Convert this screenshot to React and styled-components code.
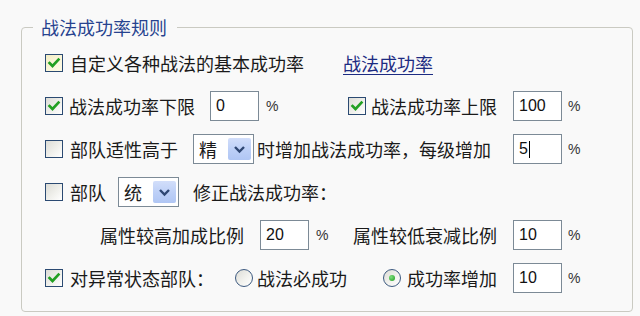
import React from 'react';
import styled, { createGlobalStyle } from 'styled-components';

const GlobalStyle = createGlobalStyle`
  html, body {
    margin: 0;
    padding: 0;
    background: #f9f9f9;
  }
  body {
    font-family: "Noto Sans CJK SC", "Noto Sans", sans-serif;
    color: #1a1a1a;
  }
`;

const Group = styled.fieldset`
  box-sizing: border-box;
  width: 612px;
  margin: 15px 0 0 21px;
  padding: 9px 0 18px 0;
  border: 1px solid #cacac2;
  border-radius: 4px;
`;

const Legend = styled.legend`
  margin-left: 11px;
  padding: 0 10px 0 8px;
  font-size: 18px;
  line-height: 24px;
  color: #27438f;
`;

const Rows = styled.div`
  display: flex;
  flex-direction: column;
  gap: 13px;
  padding: 0 48px 0 23px;
`;

const Row = styled.div`
  display: flex;
  align-items: center;
  height: 30px;
  padding-left: ${(p) => p.$indent || 0}px;
`;

const Label = styled.span`
  font-size: 18px;
  line-height: 30px;
  white-space: nowrap;
  margin-left: ${(p) => p.$gap || 0}px;
`;

const Link = styled(Label)`
  color: #1d2c82;
  text-decoration: underline;
  text-underline-offset: 3px;
`;

const Right = styled.div`
  display: flex;
  align-items: center;
  margin-left: auto;
`;

const Box = styled.span`
  box-sizing: border-box;
  flex: none;
  width: 18px;
  height: 18px;
  margin-left: ${(p) => p.$gap || 0}px;
  border: 1px solid #2b4a72;
  background: ${(p) =>
    p.$hot
      ? 'linear-gradient(135deg, #f4eec4 0%, #fbf7dc 60%, #fffbe6 100%)'
      : 'linear-gradient(135deg, #dcdcd6 0%, #f0f0ec 55%, #ffffff 100%)'};
  display: inline-flex;
  align-items: center;
  justify-content: center;
`;

const Radio = styled.span`
  box-sizing: border-box;
  flex: none;
  width: 18px;
  height: 18px;
  margin-left: ${(p) => p.$gap || 0}px;
  border: 1px solid #3d5a80;
  border-radius: 50%;
  background: linear-gradient(135deg, #dcdcd6 0%, #f2f2ee 55%, #ffffff 100%);
  display: inline-flex;
  align-items: center;
  justify-content: center;
`;

const Dot = styled.span`
  width: 6px;
  height: 6px;
  border-radius: 50%;
  background: radial-gradient(circle at 35% 35%, #7ee07e, #1f9a1f);
`;

const TextBox = styled.div`
  box-sizing: border-box;
  flex: none;
  width: 49px;
  height: 30px;
  margin-left: ${(p) => p.$gap || 0}px;
  padding-left: 5px;
  border: 1px solid #7c8a96;
  background: #ffffff;
  display: flex;
  align-items: center;
  font-family: "Liberation Sans", Arial, sans-serif;
  font-size: 16px;
  color: #111;
`;

const Caret = styled.span`
  display: inline-block;
  width: 1px;
  height: 17px;
  margin-left: 1px;
  background: #000;
`;

const Unit = styled.span`
  flex: none;
  width: 16px;
  margin-left: ${(p) => p.$gap || 7}px;
  font-family: "Liberation Sans", Arial, sans-serif;
  font-size: 14px;
  color: #333;
`;

const Combo = styled.div`
  box-sizing: border-box;
  flex: none;
  width: 61px;
  height: 30px;
  margin-left: ${(p) => p.$gap || 0}px;
  padding: 0 2px 0 5px;
  border: 1px solid #7c8a96;
  background: #ffffff;
  display: flex;
  align-items: center;
  justify-content: space-between;
  font-size: 18px;
`;

const DropButton = styled.span`
  box-sizing: border-box;
  width: 23px;
  height: 22px;
  border-radius: 2px;
  background: linear-gradient(180deg, #d2defa 0%, #bccff7 55%, #b0c6f4 100%);
  display: inline-flex;
  align-items: center;
  justify-content: center;
`;

function Check({ checked, hot, gap }) {
  return (
    <Box $hot={hot} $gap={gap}>
      {checked && (
        <svg width="14" height="14" viewBox="0 0 14 14">
          <path d="M2.5 7 L5.5 10 L11.5 3.5" fill="none" stroke="#22a022" strokeWidth="2.6" strokeLinecap="square" />
        </svg>
      )}
    </Box>
  );
}

function Select({ value, gap }) {
  return (
    <Combo $gap={gap}>
      <span>{value}</span>
      <DropButton>
        <svg width="13" height="9" viewBox="0 0 13 9">
          <path d="M2 2 L6.5 6.5 L11 2" fill="none" stroke="#2f4773" strokeWidth="2.4" />
        </svg>
      </DropButton>
    </Combo>
  );
}

export default function App() {
  return (
    <>
      <GlobalStyle />
      <Group>
        <Legend>战法成功率规则</Legend>
        <Rows>
          <Row>
            <Check checked hot />
            <Label $gap={7}>自定义各种战法的基本成功率</Label>
            <Link $gap={39}>战法成功率</Link>
          </Row>

          <Row>
            <Check checked />
            <Label $gap={6}>战法成功率下限</Label>
            <TextBox $gap={15}>0</TextBox>
            <Unit>%</Unit>
            <Right>
              <Check checked />
              <Label $gap={5}>战法成功率上限</Label>
              <TextBox $gap={16}>100</TextBox>
              <Unit $gap={6}>%</Unit>
            </Right>
          </Row>

          <Row>
            <Check />
            <Label $gap={7}>部队适性高于</Label>
            <Select value="精" gap={15} />
            <Label $gap={3}>时增加战法成功率，每级增加</Label>
            <Right>
              <TextBox>
                5<Caret />
              </TextBox>
              <Unit $gap={6}>%</Unit>
            </Right>
          </Row>

          <Row>
            <Check />
            <Label $gap={7}>部队</Label>
            <Select value="统" gap={12} />
            <Label $gap={14}>修正战法成功率：</Label>
          </Row>

          <Row $indent={55}>
            <Label>属性较高加成比例</Label>
            <TextBox $gap={16}>20</TextBox>
            <Unit>%</Unit>
            <Right>
              <Label>属性较低衰减比例</Label>
              <TextBox $gap={16}>10</TextBox>
              <Unit $gap={6}>%</Unit>
            </Right>
          </Row>

          <Row>
            <Check checked />
            <Label $gap={7}>对异常状态部队：</Label>
            <Radio $gap={21} />
            <Label $gap={4}>战法必成功</Label>
            <Right>
              <Radio>
                <Dot />
              </Radio>
              <Label $gap={6}>成功率增加</Label>
              <TextBox $gap={16}>10</TextBox>
              <Unit $gap={6}>%</Unit>
            </Right>
          </Row>
        </Rows>
      </Group>
    </>
  );
}
